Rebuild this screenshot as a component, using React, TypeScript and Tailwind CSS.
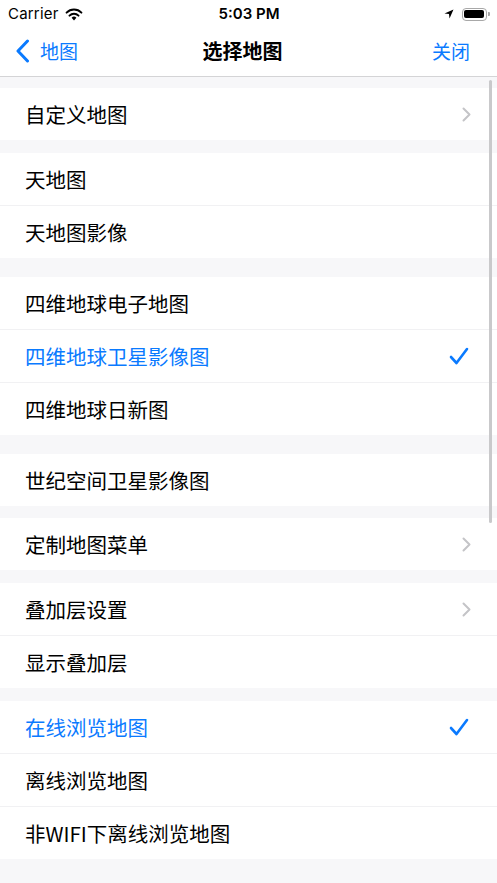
import React from 'react';

type Row = { label: string; accessory?: 'chevron' | 'check'; active?: boolean };
type Section = { gap: string; rows: Row[] };

const sections: Section[] = [
    { gap: 'h-[11px]', rows: [{ label: '自定义地图', accessory: 'chevron' }] },
    { gap: 'h-[13px]', rows: [{ label: '天地图' }, { label: '天地图影像' }] },
    {
        gap: 'h-[19px]',
        rows: [
            { label: '四维地球电子地图' },
            { label: '四维地球卫星影像图', accessory: 'check', active: true },
            { label: '四维地球日新图' },
        ],
    },
    { gap: 'h-[19px]', rows: [{ label: '世纪空间卫星影像图' }] },
    { gap: 'h-[12px]', rows: [{ label: '定制地图菜单', accessory: 'chevron' }] },
    { gap: 'h-[13px]', rows: [{ label: '叠加层设置', accessory: 'chevron' }, { label: '显示叠加层' }] },
    {
        gap: 'h-[13px]',
        rows: [
            { label: '在线浏览地图', accessory: 'check', active: true },
            { label: '离线浏览地图' },
            { label: '非WIFI下离线浏览地图' },
        ],
    },
];

const Chevron = () => (
    <svg width="9" height="15" viewBox="0 0 9 15" fill="none">
        <path d="M1.5 1.5 L7.5 7.5 L1.5 13.5" stroke="#c4c4c7" strokeWidth="2" strokeLinecap="round" strokeLinejoin="round" />
    </svg>
);

const Check = () => (
    <svg width="20" height="18" viewBox="0 0 20 18" fill="none">
        <path d="M2 10 L7.5 16 L18 2" stroke="#0a7aff" strokeWidth="2.6" strokeLinecap="round" strokeLinejoin="round" />
    </svg>
);

const StatusBar = () => (
    <div className="h-[28px] flex items-center justify-between pl-[8px] pr-[7px] text-[15px] text-black font-['Inter','Liberation_Sans',sans-serif]">
        <div className="flex items-center gap-[6px] w-[120px]">
            <span className="tracking-[0.2px]">Carrier</span>
            <svg width="18" height="13" viewBox="0 0 18 13">
                <path d="M9 12.5 L6.6 9.8 A3.4 3.4 0 0 1 11.4 9.8 Z" fill="#000" />
                <path d="M4.5 7.6 A6.4 6.4 0 0 1 13.5 7.6" stroke="#000" strokeWidth="2" fill="none" strokeLinecap="round" />
                <path d="M1.6 4.6 A10.4 10.4 0 0 1 16.4 4.6" stroke="#000" strokeWidth="2" fill="none" strokeLinecap="round" />
            </svg>
        </div>
        <span className="font-semibold">5:03 PM</span>
        <div className="flex items-center justify-end gap-[8px] w-[120px]">
            <svg width="10" height="10" viewBox="0 0 10 10">
                <path d="M9.5 0.5 L0.5 4.5 L5 5 L5.5 9.5 Z" fill="#000" />
            </svg>
            <div className="flex items-center gap-[1px]">
                <div className="w-[25px] h-[13px] rounded-[4px] border border-[#a8a8a8] p-[1.5px]">
                    <div className="w-full h-full rounded-[2px] bg-black" />
                </div>
                <div className="w-[2px] h-[4px] rounded-r-[1px] bg-[#a8a8a8]" />
            </div>
        </div>
    </div>
);

const NavBar = () => (
    <div className="h-[49px] flex items-center justify-between pl-[15px] pr-[27px] pb-[3px] border-b border-[#d4d4d6] font-['Noto_Sans_CJK_SC',sans-serif]">
        <div className="flex items-center gap-[10px] w-[120px] text-[#0a7aff]">
            <svg width="15" height="24" viewBox="0 0 15 24" fill="none">
                <path d="M12.5 2 L3 12 L12.5 22" stroke="#0a7aff" strokeWidth="3" strokeLinecap="round" strokeLinejoin="round" />
            </svg>
            <span className="text-[19px] leading-none">地图</span>
        </div>
        <span className="text-[20px] font-bold text-black leading-none">选择地图</span>
        <span className="w-[120px] text-right text-[19px] text-[#0a7aff] leading-none">关闭</span>
    </div>
);

const App: React.FC = () => {
    return (
        <div className="w-[497px] h-[883px] overflow-hidden bg-[#f7f7f9] relative">
            <div className="bg-white">
                <StatusBar />
                <NavBar />
            </div>
            <div className="flex flex-col font-['Noto_Sans_CJK_SC',sans-serif]">
                {sections.map((section, si) => (
                    <div key={si} className="flex flex-col">
                        <div className={section.gap} />
                        <div className="bg-white">
                            {section.rows.map((row, ri) => (
                                <div key={ri}>
                                    {ri > 0 && <div className="h-px bg-[#f1f1f3]" />}
                                    <div className="h-[52px] flex items-center justify-between pl-[25px] pr-[26px]">
                                        <span className={`text-[20.5px] leading-none ${row.active ? 'text-[#0a7aff]' : 'text-black'}`}>
                                            {row.label}
                                        </span>
                                        {row.accessory === 'chevron' && <Chevron />}
                                        {row.accessory === 'check' && <span className="mr-[2px]"><Check /></span>}
                                    </div>
                                </div>
                            ))}
                        </div>
                    </div>
                ))}
            </div>
            {/* scroll indicator */}
            <div className="absolute left-[489px] top-[80px] w-[3px] h-[443px] rounded-full bg-[#c9c9cb]" />
        </div>
    );
};

export default App;
